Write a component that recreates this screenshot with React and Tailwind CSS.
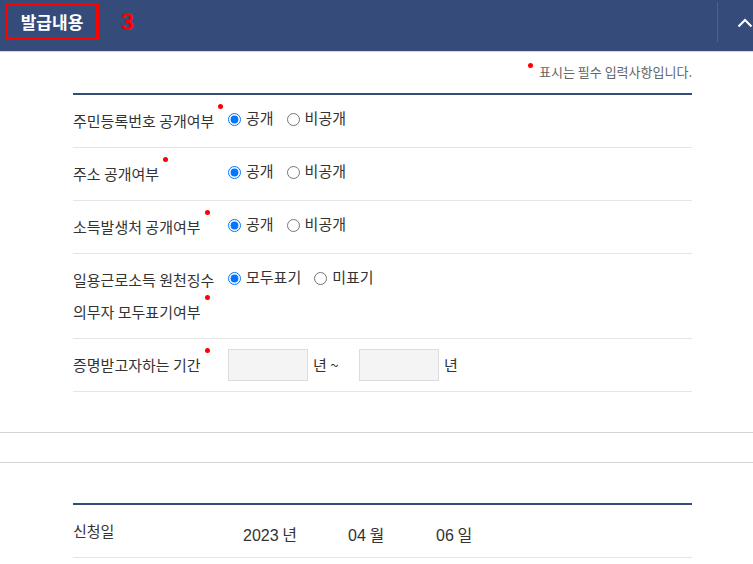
import React from 'react';

const KR = { fontFamily: '"Malgun Gothic", "Noto Sans CJK KR", "Noto Sans", sans-serif' };
const LAT = { fontFamily: '"Liberation Sans", sans-serif' };

function Req() {
    return <span className="inline-block w-[5px] h-[5px] rounded-full bg-[#ff0000] align-top ml-[4px] mt-[-1px]" />;
}

function Radio({ name, label, checked }) {
    return (
        <label className="inline-flex items-center mr-[13px]">
            <input type="radio" name={name} defaultChecked={checked} className="w-[13px] h-[13px] m-0" />
            <span className="ml-[5px] -mt-[3px]">{label}</span>
        </label>
    );
}

function Row({ label, children }) {
    return (
        <div className="flex border-b border-[#e5e5e5] py-[10px]">
            <div className="w-[155px] shrink-0 leading-[32px]">{label}</div>
            <div className="flex items-start leading-[32px]">{children}</div>
        </div>
    );
}

const radioRows = [
    { label: '주민등록번호 공개여부', name: 'jumin', options: ['공개', '비공개'] },
    { label: '주소 공개여부', name: 'addr', options: ['공개', '비공개'] },
    { label: '소득발생처 공개여부', name: 'src', options: ['공개', '비공개'] },
];

export default function App() {
    return (
        <div className="w-[753px] h-[564px] overflow-hidden bg-white text-[15px] text-[#333]" style={KR}>
            {/* Section header */}
            <div className="h-[51px] bg-[#354c7a] flex items-start border-b border-[#d5d5d5] box-content">
                <div className="ml-[5px] mt-[3px] h-[37px] w-[94px] border-[3px] border-[#ff0000] flex items-center justify-center">
                    <span className="text-white font-bold text-[17px] leading-none">발급내용</span>
                </div>
                <span className="ml-[22px] mt-[8px] text-[#ff0000] text-[23px] font-bold leading-[28px]" style={LAT}>3</span>
                <div className="ml-auto mt-[2px] h-[40px] w-px bg-[#4b6190]" />
                <div className="w-[35px] h-[46px] flex items-center justify-end">
                    <svg width="16" height="10" viewBox="0 0 16 10" className="mb-[1px]">
                        <path d="M1.5 8.5 L8 2 L14.5 8.5" fill="none" stroke="#fff" strokeWidth="2" />
                    </svg>
                </div>
            </div>

            <div className="ml-[73px] w-[619px]">
                <p className="text-right text-[13px] text-[#666] leading-[20px] pt-[10px] pb-[11px]">
                    <span className="inline-block w-[5px] h-[5px] rounded-full bg-[#ff0000] align-top mt-[1px] mr-[6px]" />
                    표시는 필수 입력사항입니다.
                </p>

                <div className="border-t-2 border-[#354c7a]">
                    {radioRows.map((r) => (
                        <Row key={r.name} label={<>{r.label}<Req /></>}>
                            {r.options.map((o, i) => (
                                <Radio key={o} name={r.name} label={o} checked={i === 0} />
                            ))}
                        </Row>
                    ))}
                    <Row label={<>일용근로소득 원천징수<br />의무자 모두표기여부<Req /></>}>
                        <Radio name="daily" label="모두표기" checked />
                        <Radio name="daily" label="미표기" />
                    </Row>
                    <Row label={<>증명받고자하는 기간<Req /></>}>
                        <input type="text" className="w-[80px] h-[32px] bg-[#f4f4f4] border border-[#dcdcdc]" />
                        <span className="ml-[5px] w-[46px]">년 ~</span>
                        <input type="text" className="w-[80px] h-[32px] bg-[#f4f4f4] border border-[#dcdcdc]" />
                        <span className="ml-[5px]">년</span>
                    </Row>
                </div>
            </div>

            {/* divider band */}
            <div className="mt-[40px] h-[29px] border-y border-[#d5d5d5] box-content" />

            <div className="ml-[73px] w-[619px] mt-[40px] border-t-2 border-[#354c7a]">
                <div className="flex border-b border-[#e5e5e5] py-[10px] leading-[32px]">
                    <div className="w-[170px] shrink-0">신청일</div>
                    <div className="flex h-[32px] pt-[3px] text-[16px]">
                        <span className="w-[105px]"><span style={LAT}>2023</span> 년</span>
                        <span className="w-[88px]"><span style={LAT}>04</span> 월</span>
                        <span><span style={LAT}>06</span> 일</span>
                    </div>
                </div>
            </div>
        </div>
    );
}
